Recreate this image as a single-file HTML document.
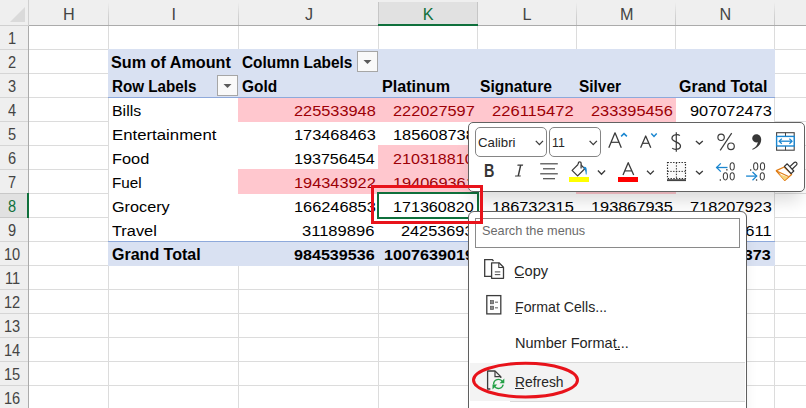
<!DOCTYPE html>
<html><head><meta charset="utf-8"><style>
html,body{margin:0;padding:0;}
body{width:806px;height:408px;overflow:hidden;position:relative;background:#fff;font-family:"Liberation Sans",sans-serif;}
</style></head><body>
<div style="position:absolute;left:0px;top:0px;width:806px;height:25px;background:#efefef;"></div><div style="position:absolute;left:0px;top:0px;width:28px;height:408px;background:#efefef;"></div><div style="position:absolute;left:108px;top:26px;width:1px;height:382px;background:#dcdcdc;"></div><div style="position:absolute;left:238px;top:26px;width:1px;height:382px;background:#dcdcdc;"></div><div style="position:absolute;left:378px;top:26px;width:1px;height:382px;background:#dcdcdc;"></div><div style="position:absolute;left:477px;top:26px;width:1px;height:382px;background:#dcdcdc;"></div><div style="position:absolute;left:576px;top:26px;width:1px;height:382px;background:#dcdcdc;"></div><div style="position:absolute;left:675px;top:26px;width:1px;height:382px;background:#dcdcdc;"></div><div style="position:absolute;left:774px;top:26px;width:1px;height:382px;background:#dcdcdc;"></div><div style="position:absolute;left:29px;top:49px;width:777px;height:1px;background:#dcdcdc;"></div><div style="position:absolute;left:29px;top:73px;width:777px;height:1px;background:#dcdcdc;"></div><div style="position:absolute;left:29px;top:97px;width:777px;height:1px;background:#dcdcdc;"></div><div style="position:absolute;left:29px;top:121px;width:777px;height:1px;background:#dcdcdc;"></div><div style="position:absolute;left:29px;top:145px;width:777px;height:1px;background:#dcdcdc;"></div><div style="position:absolute;left:29px;top:169px;width:777px;height:1px;background:#dcdcdc;"></div><div style="position:absolute;left:29px;top:193px;width:777px;height:1px;background:#dcdcdc;"></div><div style="position:absolute;left:29px;top:217px;width:777px;height:1px;background:#dcdcdc;"></div><div style="position:absolute;left:29px;top:241px;width:777px;height:1px;background:#dcdcdc;"></div><div style="position:absolute;left:29px;top:265px;width:777px;height:1px;background:#dcdcdc;"></div><div style="position:absolute;left:29px;top:289px;width:777px;height:1px;background:#dcdcdc;"></div><div style="position:absolute;left:29px;top:313px;width:777px;height:1px;background:#dcdcdc;"></div><div style="position:absolute;left:29px;top:337px;width:777px;height:1px;background:#dcdcdc;"></div><div style="position:absolute;left:29px;top:361px;width:777px;height:1px;background:#dcdcdc;"></div><div style="position:absolute;left:29px;top:385px;width:777px;height:1px;background:#dcdcdc;"></div><div style="position:absolute;left:108px;top:2px;width:1px;height:23px;background:linear-gradient(#efefef,#d2d2d2 60%,#c9c9c9);"></div><div style="position:absolute;left:238px;top:2px;width:1px;height:23px;background:linear-gradient(#efefef,#d2d2d2 60%,#c9c9c9);"></div><div style="position:absolute;left:378px;top:2px;width:1px;height:23px;background:linear-gradient(#efefef,#d2d2d2 60%,#c9c9c9);"></div><div style="position:absolute;left:477px;top:2px;width:1px;height:23px;background:linear-gradient(#efefef,#d2d2d2 60%,#c9c9c9);"></div><div style="position:absolute;left:576px;top:2px;width:1px;height:23px;background:linear-gradient(#efefef,#d2d2d2 60%,#c9c9c9);"></div><div style="position:absolute;left:675px;top:2px;width:1px;height:23px;background:linear-gradient(#efefef,#d2d2d2 60%,#c9c9c9);"></div><div style="position:absolute;left:774px;top:2px;width:1px;height:23px;background:linear-gradient(#efefef,#d2d2d2 60%,#c9c9c9);"></div><div style="position:absolute;left:0px;top:49px;width:28px;height:1px;background:#d5d5d5;"></div><div style="position:absolute;left:0px;top:73px;width:28px;height:1px;background:#d5d5d5;"></div><div style="position:absolute;left:0px;top:97px;width:28px;height:1px;background:#d5d5d5;"></div><div style="position:absolute;left:0px;top:121px;width:28px;height:1px;background:#d5d5d5;"></div><div style="position:absolute;left:0px;top:145px;width:28px;height:1px;background:#d5d5d5;"></div><div style="position:absolute;left:0px;top:169px;width:28px;height:1px;background:#d5d5d5;"></div><div style="position:absolute;left:0px;top:193px;width:28px;height:1px;background:#d5d5d5;"></div><div style="position:absolute;left:0px;top:217px;width:28px;height:1px;background:#d5d5d5;"></div><div style="position:absolute;left:0px;top:241px;width:28px;height:1px;background:#d5d5d5;"></div><div style="position:absolute;left:0px;top:265px;width:28px;height:1px;background:#d5d5d5;"></div><div style="position:absolute;left:0px;top:289px;width:28px;height:1px;background:#d5d5d5;"></div><div style="position:absolute;left:0px;top:313px;width:28px;height:1px;background:#d5d5d5;"></div><div style="position:absolute;left:0px;top:337px;width:28px;height:1px;background:#d5d5d5;"></div><div style="position:absolute;left:0px;top:361px;width:28px;height:1px;background:#d5d5d5;"></div><div style="position:absolute;left:0px;top:385px;width:28px;height:1px;background:#d5d5d5;"></div><div style="position:absolute;left:379px;top:2px;width:98px;height:22px;background:#e1e1e1;"></div><div style="position:absolute;left:378px;top:2px;width:1px;height:22px;background:#c6c6c6;"></div><div style="position:absolute;left:477px;top:2px;width:1px;height:22px;background:#c6c6c6;"></div><div style="position:absolute;left:29px;top:25px;width:777px;height:1px;background:#ababab;"></div><div style="position:absolute;left:0px;top:25px;width:28px;height:1px;background:#d0d0d0;"></div><div style="position:absolute;left:28px;top:26px;width:1px;height:382px;background:#ababab;"></div><div style="position:absolute;left:28px;top:0px;width:1px;height:26px;background:#d0d0d0;"></div><div style="position:absolute;left:378px;top:24px;width:100px;height:2px;background:#0f703c;"></div><div style="position:absolute;left:0px;top:194px;width:27px;height:23px;background:#e1e1e1;"></div><div style="position:absolute;left:0px;top:193px;width:27px;height:1px;background:#c8c8c8;"></div><div style="position:absolute;left:0px;top:217px;width:27px;height:1px;background:#c8c8c8;"></div><div style="position:absolute;left:27px;top:193px;width:2px;height:25px;background:#0f703c;"></div><svg style="position:absolute;left:0;top:0" width="28" height="25"><polygon points="25,7 25,22 10,22" fill="#dadada"/></svg><div style="position:absolute;left:108px;top:49px;width:667px;height:48px;background:#d9e1f2;"></div><div style="position:absolute;left:108px;top:97px;width:667px;height:1px;background:#8ea9db;"></div><div style="position:absolute;left:109px;top:98px;width:665px;height:143px;background:#ffffff;"></div><div style="position:absolute;left:108px;top:241px;width:667px;height:1px;background:#8ea9db;"></div><div style="position:absolute;left:108px;top:242px;width:667px;height:24px;background:#d9e1f2;"></div><div style="position:absolute;left:238px;top:98px;width:438px;height:24px;background:#ffc7ce;"></div><div style="position:absolute;left:378px;top:145px;width:100px;height:49px;background:#ffc7ce;"></div><div style="position:absolute;left:238px;top:169px;width:140px;height:25px;background:#ffc7ce;"></div><div style="position:absolute;left:576px;top:169px;width:100px;height:25px;background:#ffc7ce;"></div><div style="position:absolute;left:217px;top:75px;width:19px;height:19px;border:1px solid #a6a6a6;background:#f9f9f9"></div><svg style="position:absolute;left:217px;top:75px" width="21" height="21"><polygon points="6.5,9 14.5,9 10.5,13" fill="#5a5a5a"/></svg><div style="position:absolute;left:357px;top:51px;width:19px;height:19px;border:1px solid #a6a6a6;background:#f9f9f9"></div><svg style="position:absolute;left:357px;top:51px" width="21" height="21"><polygon points="6.5,9 14.5,9 10.5,13" fill="#5a5a5a"/></svg><div style="position:absolute;left:63.00px;top:6.00px;font-family:'Liberation Sans';font-size:16.2px;line-height:16.2px;font-weight:normal;font-style:normal;color:#444444;white-space:pre;transform-origin:0 0;transform:scaleX(1.0000);">H</div><div style="position:absolute;left:171.40px;top:6.00px;font-family:'Liberation Sans';font-size:16.2px;line-height:16.2px;font-weight:normal;font-style:normal;color:#444444;white-space:pre;transform-origin:0 0;transform:scaleX(1.0000);">I</div><div style="position:absolute;left:304.90px;top:6.00px;font-family:'Liberation Sans';font-size:16.2px;line-height:16.2px;font-weight:normal;font-style:normal;color:#444444;white-space:pre;transform-origin:0 0;transform:scaleX(1.0000);">J</div><div style="position:absolute;left:422.80px;top:6.00px;font-family:'Liberation Sans';font-size:16.2px;line-height:16.2px;font-weight:normal;font-style:normal;color:#0f703c;white-space:pre;transform-origin:0 0;transform:scaleX(1.0000);">K</div><div style="position:absolute;left:522.50px;top:6.00px;font-family:'Liberation Sans';font-size:16.2px;line-height:16.2px;font-weight:normal;font-style:normal;color:#444444;white-space:pre;transform-origin:0 0;transform:scaleX(1.0000);">L</div><div style="position:absolute;left:620.00px;top:6.00px;font-family:'Liberation Sans';font-size:16.2px;line-height:16.2px;font-weight:normal;font-style:normal;color:#444444;white-space:pre;transform-origin:0 0;transform:scaleX(1.0000);">M</div><div style="position:absolute;left:719.50px;top:6.00px;font-family:'Liberation Sans';font-size:16.2px;line-height:16.2px;font-weight:normal;font-style:normal;color:#444444;white-space:pre;transform-origin:0 0;transform:scaleX(1.0000);">N</div><div style="position:absolute;left:8.40px;top:29.60px;font-family:'Liberation Sans';font-size:16.2px;line-height:16.2px;font-weight:normal;font-style:normal;color:#444444;white-space:pre;transform-origin:0 0;transform:scaleX(0.9000);">1</div><div style="position:absolute;left:8.40px;top:53.60px;font-family:'Liberation Sans';font-size:16.2px;line-height:16.2px;font-weight:normal;font-style:normal;color:#444444;white-space:pre;transform-origin:0 0;transform:scaleX(0.9000);">2</div><div style="position:absolute;left:8.40px;top:77.60px;font-family:'Liberation Sans';font-size:16.2px;line-height:16.2px;font-weight:normal;font-style:normal;color:#444444;white-space:pre;transform-origin:0 0;transform:scaleX(0.9000);">3</div><div style="position:absolute;left:8.40px;top:101.60px;font-family:'Liberation Sans';font-size:16.2px;line-height:16.2px;font-weight:normal;font-style:normal;color:#444444;white-space:pre;transform-origin:0 0;transform:scaleX(0.9000);">4</div><div style="position:absolute;left:8.40px;top:125.60px;font-family:'Liberation Sans';font-size:16.2px;line-height:16.2px;font-weight:normal;font-style:normal;color:#444444;white-space:pre;transform-origin:0 0;transform:scaleX(0.9000);">5</div><div style="position:absolute;left:8.40px;top:149.60px;font-family:'Liberation Sans';font-size:16.2px;line-height:16.2px;font-weight:normal;font-style:normal;color:#444444;white-space:pre;transform-origin:0 0;transform:scaleX(0.9000);">6</div><div style="position:absolute;left:8.40px;top:173.60px;font-family:'Liberation Sans';font-size:16.2px;line-height:16.2px;font-weight:normal;font-style:normal;color:#444444;white-space:pre;transform-origin:0 0;transform:scaleX(0.9000);">7</div><div style="position:absolute;left:8.40px;top:197.60px;font-family:'Liberation Sans';font-size:16.2px;line-height:16.2px;font-weight:normal;font-style:normal;color:#0f703c;white-space:pre;transform-origin:0 0;transform:scaleX(0.9000);">8</div><div style="position:absolute;left:8.40px;top:221.60px;font-family:'Liberation Sans';font-size:16.2px;line-height:16.2px;font-weight:normal;font-style:normal;color:#444444;white-space:pre;transform-origin:0 0;transform:scaleX(0.9000);">9</div><div style="position:absolute;left:3.90px;top:245.60px;font-family:'Liberation Sans';font-size:16.2px;line-height:16.2px;font-weight:normal;font-style:normal;color:#444444;white-space:pre;transform-origin:0 0;transform:scaleX(0.9000);">10</div><div style="position:absolute;left:4.80px;top:269.60px;font-family:'Liberation Sans';font-size:16.2px;line-height:16.2px;font-weight:normal;font-style:normal;color:#444444;white-space:pre;transform-origin:0 0;transform:scaleX(0.9000);">11</div><div style="position:absolute;left:4.35px;top:293.60px;font-family:'Liberation Sans';font-size:16.2px;line-height:16.2px;font-weight:normal;font-style:normal;color:#444444;white-space:pre;transform-origin:0 0;transform:scaleX(0.9000);">12</div><div style="position:absolute;left:4.35px;top:317.60px;font-family:'Liberation Sans';font-size:16.2px;line-height:16.2px;font-weight:normal;font-style:normal;color:#444444;white-space:pre;transform-origin:0 0;transform:scaleX(0.9000);">13</div><div style="position:absolute;left:3.90px;top:341.60px;font-family:'Liberation Sans';font-size:16.2px;line-height:16.2px;font-weight:normal;font-style:normal;color:#444444;white-space:pre;transform-origin:0 0;transform:scaleX(0.9000);">14</div><div style="position:absolute;left:4.35px;top:365.60px;font-family:'Liberation Sans';font-size:16.2px;line-height:16.2px;font-weight:normal;font-style:normal;color:#444444;white-space:pre;transform-origin:0 0;transform:scaleX(0.9000);">15</div><div style="position:absolute;left:4.35px;top:389.60px;font-family:'Liberation Sans';font-size:16.2px;line-height:16.2px;font-weight:normal;font-style:normal;color:#444444;white-space:pre;transform-origin:0 0;transform:scaleX(0.9000);">16</div><div style="position:absolute;left:111.29px;top:54.90px;font-family:'Liberation Sans';font-size:16.0px;line-height:16.0px;font-weight:bold;font-style:normal;color:#000;white-space:pre;transform-origin:0 0;transform:scaleX(1.0110);">Sum of Amount</div><div style="position:absolute;left:241.54px;top:54.90px;font-family:'Liberation Sans';font-size:16.0px;line-height:16.0px;font-weight:bold;font-style:normal;color:#000;white-space:pre;transform-origin:0 0;transform:scaleX(0.9628);">Column Labels</div><div style="position:absolute;left:111.85px;top:78.60px;font-family:'Liberation Sans';font-size:16.0px;line-height:16.0px;font-weight:bold;font-style:normal;color:#000;white-space:pre;transform-origin:0 0;transform:scaleX(0.9506);">Row Labels</div><div style="position:absolute;left:241.53px;top:78.60px;font-family:'Liberation Sans';font-size:16.0px;line-height:16.0px;font-weight:bold;font-style:normal;color:#000;white-space:pre;transform-origin:0 0;transform:scaleX(0.9657);">Gold</div><div style="position:absolute;left:381.79px;top:78.60px;font-family:'Liberation Sans';font-size:16.0px;line-height:16.0px;font-weight:bold;font-style:normal;color:#000;white-space:pre;transform-origin:0 0;transform:scaleX(1.0061);">Platinum</div><div style="position:absolute;left:480.23px;top:78.60px;font-family:'Liberation Sans';font-size:16.0px;line-height:16.0px;font-weight:bold;font-style:normal;color:#000;white-space:pre;transform-origin:0 0;transform:scaleX(0.9740);">Signature</div><div style="position:absolute;left:579.24px;top:78.60px;font-family:'Liberation Sans';font-size:16.0px;line-height:16.0px;font-weight:bold;font-style:normal;color:#000;white-space:pre;transform-origin:0 0;transform:scaleX(0.9643);">Silver</div><div style="position:absolute;left:678.60px;top:78.60px;font-family:'Liberation Sans';font-size:16.0px;line-height:16.0px;font-weight:bold;font-style:normal;color:#000;white-space:pre;transform-origin:0 0;transform:scaleX(0.9977);">Grand Total</div><div style="position:absolute;left:112.15px;top:102.50px;font-family:'Liberation Sans';font-size:15.2px;line-height:15.2px;font-weight:normal;font-style:normal;color:#000;white-space:pre;transform-origin:0 0;transform:scaleX(1.0462);">Bills</div><div style="position:absolute;left:293.62px;top:102.50px;font-family:'Liberation Sans';font-size:15.2px;line-height:15.2px;font-weight:normal;font-style:normal;color:#9c0006;white-space:pre;transform-origin:0 0;transform:scaleX(1.0757);">225533948</div><div style="position:absolute;left:392.62px;top:102.50px;font-family:'Liberation Sans';font-size:15.2px;line-height:15.2px;font-weight:normal;font-style:normal;color:#9c0006;white-space:pre;transform-origin:0 0;transform:scaleX(1.0757);">222027597</div><div style="position:absolute;left:491.61px;top:102.50px;font-family:'Liberation Sans';font-size:15.2px;line-height:15.2px;font-weight:normal;font-style:normal;color:#9c0006;white-space:pre;transform-origin:0 0;transform:scaleX(1.0904);">226115472</div><div style="position:absolute;left:590.62px;top:102.50px;font-family:'Liberation Sans';font-size:15.2px;line-height:15.2px;font-weight:normal;font-style:normal;color:#9c0006;white-space:pre;transform-origin:0 0;transform:scaleX(1.0757);">233395456</div><div style="position:absolute;left:689.62px;top:102.50px;font-family:'Liberation Sans';font-size:15.2px;line-height:15.2px;font-weight:normal;font-style:normal;color:#000;white-space:pre;transform-origin:0 0;transform:scaleX(1.0757);">907072473</div><div style="position:absolute;left:112.10px;top:126.50px;font-family:'Liberation Sans';font-size:15.2px;line-height:15.2px;font-weight:normal;font-style:normal;color:#000;white-space:pre;transform-origin:0 0;transform:scaleX(1.1043);">Entertainment</div><div style="position:absolute;left:293.62px;top:126.50px;font-family:'Liberation Sans';font-size:15.2px;line-height:15.2px;font-weight:normal;font-style:normal;color:#000;white-space:pre;transform-origin:0 0;transform:scaleX(1.0757);">173468463</div><div style="position:absolute;left:392.62px;top:126.50px;font-family:'Liberation Sans';font-size:15.2px;line-height:15.2px;font-weight:normal;font-style:normal;color:#000;white-space:pre;transform-origin:0 0;transform:scaleX(1.0757);">185608738</div><div style="position:absolute;left:111.72px;top:150.50px;font-family:'Liberation Sans';font-size:15.2px;line-height:15.2px;font-weight:normal;font-style:normal;color:#000;white-space:pre;transform-origin:0 0;transform:scaleX(1.0758);">Food</div><div style="position:absolute;left:293.64px;top:150.50px;font-family:'Liberation Sans';font-size:15.2px;line-height:15.2px;font-weight:normal;font-style:normal;color:#000;white-space:pre;transform-origin:0 0;transform:scaleX(1.0613);">193756454</div><div style="position:absolute;left:392.64px;top:150.50px;font-family:'Liberation Sans';font-size:15.2px;line-height:15.2px;font-weight:normal;font-style:normal;color:#9c0006;white-space:pre;transform-origin:0 0;transform:scaleX(1.0613);">210318810</div><div style="position:absolute;left:111.80px;top:174.50px;font-family:'Liberation Sans';font-size:15.2px;line-height:15.2px;font-weight:normal;font-style:normal;color:#000;white-space:pre;transform-origin:0 0;transform:scaleX(1.0036);">Fuel</div><div style="position:absolute;left:293.62px;top:174.50px;font-family:'Liberation Sans';font-size:15.2px;line-height:15.2px;font-weight:normal;font-style:normal;color:#9c0006;white-space:pre;transform-origin:0 0;transform:scaleX(1.0757);">194343922</div><div style="position:absolute;left:392.62px;top:174.50px;font-family:'Liberation Sans';font-size:15.2px;line-height:15.2px;font-weight:normal;font-style:normal;color:#9c0006;white-space:pre;transform-origin:0 0;transform:scaleX(1.0757);">194069361</div><div style="position:absolute;left:111.73px;top:198.50px;font-family:'Liberation Sans';font-size:15.2px;line-height:15.2px;font-weight:normal;font-style:normal;color:#000;white-space:pre;transform-origin:0 0;transform:scaleX(1.0679);">Grocery</div><div style="position:absolute;left:293.62px;top:198.50px;font-family:'Liberation Sans';font-size:15.2px;line-height:15.2px;font-weight:normal;font-style:normal;color:#000;white-space:pre;transform-origin:0 0;transform:scaleX(1.0757);">166246853</div><div style="position:absolute;left:392.64px;top:198.50px;font-family:'Liberation Sans';font-size:15.2px;line-height:15.2px;font-weight:normal;font-style:normal;color:#000;white-space:pre;transform-origin:0 0;transform:scaleX(1.0613);">171360820</div><div style="position:absolute;left:491.62px;top:198.50px;font-family:'Liberation Sans';font-size:15.2px;line-height:15.2px;font-weight:normal;font-style:normal;color:#000;white-space:pre;transform-origin:0 0;transform:scaleX(1.0757);">186732315</div><div style="position:absolute;left:590.62px;top:198.50px;font-family:'Liberation Sans';font-size:15.2px;line-height:15.2px;font-weight:normal;font-style:normal;color:#000;white-space:pre;transform-origin:0 0;transform:scaleX(1.0757);">193867935</div><div style="position:absolute;left:689.62px;top:198.50px;font-family:'Liberation Sans';font-size:15.2px;line-height:15.2px;font-weight:normal;font-style:normal;color:#000;white-space:pre;transform-origin:0 0;transform:scaleX(1.0757);">718207923</div><div style="position:absolute;left:112.30px;top:222.50px;font-family:'Liberation Sans';font-size:15.2px;line-height:15.2px;font-weight:normal;font-style:normal;color:#000;white-space:pre;transform-origin:0 0;transform:scaleX(1.0756);">Travel</div><div style="position:absolute;left:302.46px;top:222.50px;font-family:'Liberation Sans';font-size:15.2px;line-height:15.2px;font-weight:normal;font-style:normal;color:#000;white-space:pre;transform-origin:0 0;transform:scaleX(1.0885);">31189896</div><div style="position:absolute;left:401.47px;top:222.50px;font-family:'Liberation Sans';font-size:15.2px;line-height:15.2px;font-weight:normal;font-style:normal;color:#000;white-space:pre;transform-origin:0 0;transform:scaleX(1.0720);">24253693</div><div style="position:absolute;left:689.61px;top:222.50px;font-family:'Liberation Sans';font-size:15.2px;line-height:15.2px;font-weight:normal;font-style:normal;color:#000;white-space:pre;transform-origin:0 0;transform:scaleX(1.0904);">120305611</div><div style="position:absolute;left:111.70px;top:247.00px;font-family:'Liberation Sans';font-size:16.0px;line-height:16.0px;font-weight:bold;font-style:normal;color:#000;white-space:pre;transform-origin:0 0;transform:scaleX(1.0011);">Grand Total</div><div style="position:absolute;left:293.74px;top:247.00px;font-family:'Liberation Sans';font-size:15.2px;line-height:15.2px;font-weight:bold;font-style:normal;color:#000;white-space:pre;transform-origin:0 0;transform:scaleX(1.0613);">984539536</div><div style="position:absolute;left:383.79px;top:247.00px;font-family:'Liberation Sans';font-size:15.2px;line-height:15.2px;font-weight:bold;font-style:normal;color:#000;white-space:pre;transform-origin:0 0;transform:scaleX(1.0656);">1007639019</div><div style="position:absolute;left:689.64px;top:247.00px;font-family:'Liberation Sans';font-size:15.2px;line-height:15.2px;font-weight:bold;font-style:normal;color:#000;white-space:pre;transform-origin:0 0;transform:scaleX(1.0613);">931002373</div><div style="position:absolute;left:377px;top:192px;width:98px;height:23px;border:2px solid #0f703c"></div><div style="position:absolute;left:468px;top:122px;width:335px;height:68px;border:1px solid #626262;border-radius:5px;background:#fff;box-shadow:0 13px 16px -5px rgba(0,0,0,0.15)"></div><div style="position:absolute;left:475px;top:127px;width:70px;height:28px;border:1px solid #858585;border-radius:5px;background:#fff"></div><div style="position:absolute;left:549px;top:127px;width:50px;height:28px;border:1px solid #858585;border-radius:5px;background:#fff"></div><div style="position:absolute;left:477.67px;top:137.00px;font-family:'Liberation Sans';font-size:12.8px;line-height:12.8px;font-weight:normal;font-style:normal;color:#262626;white-space:pre;transform-origin:0 0;transform:scaleX(1.0343);">Calibri</div><div style="position:absolute;left:551.83px;top:137.00px;font-family:'Liberation Sans';font-size:12.8px;line-height:12.8px;font-weight:normal;font-style:normal;color:#262626;white-space:pre;transform-origin:0 0;transform:scaleX(0.9667);">11</div><div style="position:absolute;left:484.28px;top:162.70px;font-family:'Liberation Sans';font-size:17.6px;line-height:17.6px;font-weight:bold;font-style:normal;color:#363636;white-space:pre;transform-origin:0 0;transform:scaleX(0.8182);">B</div><svg style="position:absolute;left:0;top:0" width="806" height="408"><polyline points="535.8,140.9 539.4,144.6 543,140.9" fill="none" stroke="#3b3b3b" stroke-width="1.3"/><polyline points="589.6,140.9 593.25,144.6 596.9,140.9" fill="none" stroke="#3b3b3b" stroke-width="1.3"/><polyline points="608.8,147.7 615,132.8 621.3,147.7" fill="none" stroke="#3b3b3b" stroke-width="1.3" stroke-linejoin="round"/><line x1="611" y1="142.3" x2="619" y2="142.3" stroke="#3b3b3b" stroke-width="1.2"/><polyline points="621.1,136.4 624,133.6 626.9,136.4" fill="none" stroke="#1a86d0" stroke-width="1.5"/><polyline points="640.6,147.7 645.7,136 650.8,147.7" fill="none" stroke="#3b3b3b" stroke-width="1.3" stroke-linejoin="round"/><line x1="642.4" y1="143.3" x2="649" y2="143.3" stroke="#3b3b3b" stroke-width="1.2"/><polyline points="651.3,133.6 654,136.4 656.7,133.6" fill="none" stroke="#1a86d0" stroke-width="1.5"/><line x1="676.3" y1="132.2" x2="676.3" y2="151.8" stroke="#3b3b3b" stroke-width="1.2"/><path d="M679.8,135.6 C678.5,134.3 672,134 672,138.4 C672,142 680.5,141.8 680.5,146 C680.5,150 674,149.8 672.2,148.1" fill="none" stroke="#3b3b3b" stroke-width="1.3"/><polyline points="695.9,141 699.3499999999999,144.1 702.8,141" fill="none" stroke="#3b3b3b" stroke-width="1.3"/><circle cx="721.1" cy="137.3" r="3.2" fill="none" stroke="#3b3b3b" stroke-width="1.2"/><circle cx="731" cy="146.3" r="3.3" fill="none" stroke="#3b3b3b" stroke-width="1.2"/><line x1="731.7" y1="133.2" x2="720.2" y2="150.3" stroke="#3b3b3b" stroke-width="1.2"/><path d="M756.3,134.3 C759.5,134.3 761.2,136.8 761.2,139.6 C761.2,144.5 757.5,148.2 752.6,149.8 L752.2,149 C755.5,147.5 757.4,145.2 757.8,142.3 C754.8,142.8 752.2,140.8 752.2,138.4 C752.2,136 754,134.3 756.3,134.3 Z" fill="#383838"/><rect x="776.6" y="132.7" width="17.6" height="17.5" fill="none" stroke="#444" stroke-width="1.1"/><line x1="785.5" y1="132.7" x2="785.5" y2="150.2" stroke="#444" stroke-width="1"/><rect x="776.6" y="136.4" width="17.6" height="9.6" fill="#fff" stroke="#1a86d0" stroke-width="1.4"/><line x1="779.3" y1="141.2" x2="791.9" y2="141.2" stroke="#1a86d0" stroke-width="1.3"/><polyline points="781.8,138.6 779.2,141.2 781.8,143.8" fill="none" stroke="#1a86d0" stroke-width="1.3"/><polyline points="789.4,138.6 792,141.2 789.4,143.8" fill="none" stroke="#1a86d0" stroke-width="1.3"/><path d="M517.6,164.6 L523.2,164.6 L522.9,165.8 L521.3,165.8 L519.1,175.4 L520.9,175.4 L520.6,176.6 L514.9,176.6 L515.2,175.4 L517.6,175.4 L519.8,165.8 L517.3,165.8 Z" fill="#3a3a3a"/><line x1="540.2" y1="163.8" x2="557.8" y2="163.8" stroke="#4a4a4a" stroke-width="1.2"/><line x1="543" y1="168.8" x2="555" y2="168.8" stroke="#4a4a4a" stroke-width="1.2"/><line x1="540.2" y1="173.8" x2="557.8" y2="173.8" stroke="#4a4a4a" stroke-width="1.2"/><line x1="543" y1="178.7" x2="555" y2="178.7" stroke="#4a4a4a" stroke-width="1.2"/><path d="M572.1,170.4 L579.3,163.3 L584.8,168.8 L577.6,175.9 Z" fill="#fff" stroke="#3b3b3b" stroke-width="1.25" stroke-linejoin="round"/><path d="M578.3,164.3 L578.3,163 C578.3,161.4 581.1,161.4 581.1,163 L581.1,168.6" fill="#fff" stroke="#3b3b3b" stroke-width="1.25"/><path d="M583.3,167.6 C583.8,166.5 585.5,166.4 586.3,167.8 C586.9,169 586.9,172 586.6,174.4 L585.8,174.4 C585.6,171.5 585.1,169.6 583.3,167.6 Z" fill="#1a86d0"/><rect x="569" y="177" width="20" height="5" fill="#ffff00"/><polyline points="597.9,170.5 601.5,174.3 605.1,170.5" fill="none" stroke="#3b3b3b" stroke-width="1.3"/><polyline points="623,175.1 628.2,162.7 633.7,175.1" fill="none" stroke="#3b3b3b" stroke-width="1.3" stroke-linejoin="round"/><line x1="625" y1="170.9" x2="631.7" y2="170.9" stroke="#3b3b3b" stroke-width="1.2"/><rect x="618" y="177" width="20" height="5" fill="#ff0000"/><polyline points="647,170.7 650.4,174.1 653.8,170.7" fill="none" stroke="#3b3b3b" stroke-width="1.3"/><rect x="667.5" y="162.5" width="18" height="16" fill="#fafafa" stroke="#2a2a2a" stroke-width="1.15" stroke-dasharray="1.4,1.4"/><line x1="676.4" y1="162.5" x2="676.4" y2="178.5" stroke="#333" stroke-width="1" stroke-dasharray="1.4,1.4"/><line x1="667.5" y1="171.4" x2="685.5" y2="171.4" stroke="#333" stroke-width="1" stroke-dasharray="1.4,1.4"/><rect x="667" y="179.2" width="19" height="1.9" fill="#444"/><polyline points="696,171.1 699.4,174.1 702.8,171.1" fill="none" stroke="#3b3b3b" stroke-width="1.3"/><line x1="716.6" y1="167.5" x2="727.5" y2="167.5" stroke="#1a86d0" stroke-width="1.3"/><polyline points="720.8,163.4 716.6,167.5 720.8,171.6" fill="none" stroke="#1a86d0" stroke-width="1.3"/><rect x="726.1999999999999" y="169.10000000000002" width="1.3" height="1.4" fill="#3c3c3c"/><ellipse cx="732.2" cy="166.4" rx="2.1" ry="3.5999999999999996" fill="none" stroke="#3c3c3c" stroke-width="1.05"/><rect x="719.6999999999999" y="179.3" width="1.3" height="1.4" fill="#3c3c3c"/><ellipse cx="725.4" cy="176.3" rx="2.1" ry="3.5999999999999996" fill="none" stroke="#3c3c3c" stroke-width="1.05"/><ellipse cx="732.2" cy="176.3" rx="2.1" ry="3.5999999999999996" fill="none" stroke="#3c3c3c" stroke-width="1.05"/><rect x="750.0" y="169.3" width="1.3" height="1.4" fill="#3c3c3c"/><ellipse cx="755.7" cy="166.4" rx="2.1" ry="3.5999999999999996" fill="none" stroke="#3c3c3c" stroke-width="1.05"/><ellipse cx="762.5" cy="166.4" rx="2.1" ry="3.5999999999999996" fill="none" stroke="#3c3c3c" stroke-width="1.05"/><line x1="746.1" y1="176.1" x2="756.7" y2="176.1" stroke="#1a86d0" stroke-width="1.3"/><polyline points="752.5,172 756.7,176.1 752.5,180.2" fill="none" stroke="#1a86d0" stroke-width="1.3"/><rect x="755.9" y="179.3" width="1.3" height="1.4" fill="#3c3c3c"/><ellipse cx="762.3" cy="176.3" rx="2.1" ry="3.5999999999999996" fill="none" stroke="#3c3c3c" stroke-width="1.05"/><path d="M776.3,170.7 L784.2,167 L791.6,174.4 L784.7,180.4 Z" fill="#fff" stroke="#e07b12" stroke-width="1.3" stroke-linejoin="round"/><path d="M779.2,174.3 L788,176.9 L784.7,180.2 Z" fill="#f7d57a"/><path d="M776.6,170.9 L788.5,176.5" fill="none" stroke="#e07b12" stroke-width="1.1"/><path d="M789.9,166.6 L794.2,162.5 C794.8,161.9 795.9,162 796.5,162.6 C797.1,163.2 797.2,164.2 796.6,164.8 L792.3,169" fill="#fff" stroke="#333" stroke-width="1.2" stroke-linejoin="round"/><path d="M784.4,166.4 L787.2,163.8 L793.8,171 L791.1,173.6 Z" fill="#fff" stroke="#333" stroke-width="1.2" stroke-linejoin="round"/></svg><div style="position:absolute;left:468px;top:211px;width:277px;height:220px;border:1px solid #5f5f5f;border-radius:6px;background:#fff;box-shadow:2px 4px 10px rgba(0,0,0,0.05)"></div><div style="position:absolute;left:475px;top:218px;width:263px;height:28px;border:1px solid #8a8a8a;background:#fff"></div><div style="position:absolute;left:482.39px;top:224.70px;font-family:'Liberation Sans';font-size:12.6px;line-height:12.6px;font-weight:normal;font-style:normal;color:#6b6b6b;white-space:pre;transform-origin:0 0;transform:scaleX(1.0099);">Search the menus</div><div style="position:absolute;left:470px;top:363px;width:275px;height:38px;background:#f3f3f3"></div><div style="position:absolute;left:510px;top:362px;width:235px;height:1px;background:#d8d8d8"></div><div style="position:absolute;left:510px;top:401px;width:235px;height:1px;background:#d8d8d8"></div><div style="position:absolute;left:514.18px;top:264.30px;font-family:'Liberation Sans';font-size:14.4px;line-height:14.4px;font-weight:normal;font-style:normal;color:#262626;white-space:pre;transform-origin:0 0;transform:scaleX(1.0152);">Copy</div><div style="position:absolute;left:514.62px;top:299.70px;font-family:'Liberation Sans';font-size:14.4px;line-height:14.4px;font-weight:normal;font-style:normal;color:#262626;white-space:pre;transform-origin:0 0;transform:scaleX(0.9835);">Format Cells...</div><div style="position:absolute;left:515.29px;top:335.70px;font-family:'Liberation Sans';font-size:14.4px;line-height:14.4px;font-weight:normal;font-style:normal;color:#262626;white-space:pre;transform-origin:0 0;transform:scaleX(1.0090);">Number Format...</div><div style="position:absolute;left:514.94px;top:374.70px;font-family:'Liberation Sans';font-size:14.4px;line-height:14.4px;font-weight:normal;font-style:normal;color:#262626;white-space:pre;transform-origin:0 0;transform:scaleX(0.9633);">Refresh</div><div style="position:absolute;left:515px;top:277px;width:9px;height:1px;background:#262626"></div><div style="position:absolute;left:515px;top:313px;width:7px;height:1px;background:#262626"></div><div style="position:absolute;left:615px;top:349px;width:5px;height:1px;background:#262626"></div><div style="position:absolute;left:515px;top:388px;width:9px;height:1px;background:#262626"></div><svg style="position:absolute;left:0;top:0" width="806" height="408"><path d="M491.5,276.3 L484.7,276.3 L484.7,259.6 L492.3,259.6 L493.5,261" fill="none" stroke="#3c3c3c" stroke-width="1.3"/><path d="M491.6,278.3 L491.6,262.8 L499,262.8 L503.5,267.3 L503.5,278.3 Z" fill="#fff" stroke="#3c3c3c" stroke-width="1.3" stroke-linejoin="round"/><path d="M498.8,262.8 L498.8,267.5 L503.5,267.5" fill="none" stroke="#3c3c3c" stroke-width="1.1"/><line x1="494.8" y1="271.9" x2="500.3" y2="271.9" stroke="#555" stroke-width="1.1"/><line x1="494.8" y1="274.6" x2="500.3" y2="274.6" stroke="#555" stroke-width="1.1"/><rect x="486.8" y="295.6" width="14" height="18.3" fill="#fff" stroke="#3c3c3c" stroke-width="1.3"/><rect x="490.4" y="300.6" width="3.2" height="3.2" fill="#8a8a8a" stroke="#555" stroke-width="0.7"/><rect x="490.4" y="306.2" width="3.2" height="3.2" fill="#8a8a8a" stroke="#555" stroke-width="0.7"/><line x1="495" y1="302.2" x2="498" y2="302.2" stroke="#777" stroke-width="1.2"/><line x1="495" y1="307.8" x2="498" y2="307.8" stroke="#777" stroke-width="1.2"/><path d="M490.3,389 L487.6,389 L487.6,371 L495,371 L500.8,376.6 L500.8,378" fill="none" stroke="#3c3c3c" stroke-width="1.3" stroke-linejoin="round"/><path d="M495,371 L495,376.6 L500.8,376.6" fill="none" stroke="#3c3c3c" stroke-width="1.2"/><path d="M493.6,384.4 A4.9,4.9 0 0 1 502.6,381.6" fill="none" stroke="#22a045" stroke-width="1.35"/><path d="M503.2,384.6 A4.9,4.9 0 0 1 494.4,386.4" fill="none" stroke="#22a045" stroke-width="1.35"/><polygon points="504.3,378.4 504.3,383.3 499.6,383.3" fill="#22a045"/><polygon points="492.5,389.4 492.5,384.6 497.2,384.6" fill="#22a045"/></svg><div style="position:absolute;left:371px;top:185px;width:106px;height:33px;border:3px solid #e8131b"></div><svg style="position:absolute;left:0;top:0" width="806" height="408"><ellipse cx="525.5" cy="380.1" rx="52" ry="16.8" fill="none" stroke="#e8131b" stroke-width="3"/></svg>
</body></html>
